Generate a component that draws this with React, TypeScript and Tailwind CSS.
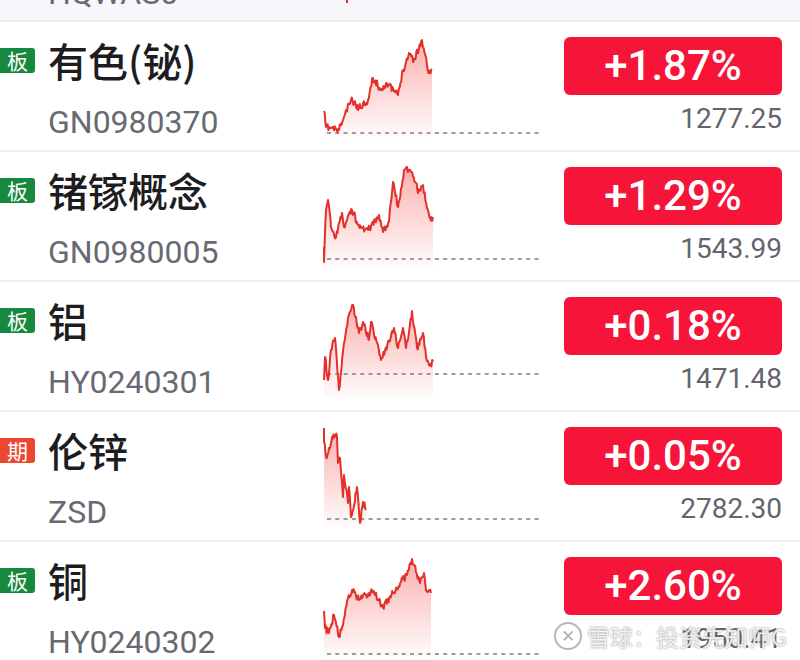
import React from 'react';

type Pt = [number, number];

interface Quote {
  badge: '板' | '期';
  name: string;
  code: string;
  change: string;
  price: string;
  keys: Pt[];
  base: number;
  seed: number;
}

const quotes: Quote[] = [
  {
    badge: '板',
    name: '有色(铋)',
    code: 'GN0980370',
    change: '+1.87%',
    price: '1277.25',
    base: 96,
    seed: 11,
    keys: [[1, 74], [3, 90], [16, 93], [21, 80], [28, 63], [36, 71], [45, 63], [50, 41], [58, 53], [63, 46], [75, 58], [80, 33], [86, 16], [91, 23], [99, 3], [104, 28], [106, 36], [109, 33]],
  },
  {
    badge: '板',
    name: '锗镓概念',
    code: 'GN0980005',
    change: '+1.29%',
    price: '1543.99',
    base: 92,
    seed: 23,
    keys: [[1, 80], [1, 95], [3, 43], [5, 33], [8, 60], [13, 70], [19, 46], [21, 60], [29, 43], [35, 58], [45, 63], [56, 48], [60, 65], [66, 55], [70, 15], [75, 40], [81, 3], [87, 3], [93, 16], [95, 26], [100, 18], [104, 41], [107, 51], [110, 50]],
  },
  {
    badge: '板',
    name: '铝',
    code: 'HY0240301',
    change: '+0.18%',
    price: '1471.48',
    base: 77,
    seed: 37,
    keys: [[1, 83], [2, 60], [5, 83], [8, 53], [12, 41], [16, 93], [20, 55], [25, 21], [30, 8], [36, 36], [40, 25], [46, 43], [48, 25], [58, 63], [66, 45], [71, 31], [75, 51], [80, 31], [83, 51], [89, 14], [94, 51], [100, 36], [103, 60], [106, 68], [110, 65]],
  },
  {
    badge: '期',
    name: '伦锌',
    code: 'ZSD',
    change: '+0.05%',
    price: '2782.30',
    base: 92,
    seed: 41,
    keys: [[1, 1], [1, 15], [3, 30], [6, 21], [9, 10], [11, 8], [14, 10], [15, 36], [17, 31], [20, 70], [21, 48], [25, 76], [26, 60], [28, 90], [31, 78], [34, 60], [37, 96], [40, 75], [43, 83]],
  },
  {
    badge: '板',
    name: '铜',
    code: 'HY0240302',
    change: '+2.60%',
    price: '1950.41',
    base: 97,
    seed: 53,
    keys: [[1, 54], [2, 71], [6, 76], [11, 58], [16, 80], [20, 68], [25, 41], [29, 33], [36, 43], [43, 38], [50, 34], [60, 50], [70, 36], [78, 25], [84, 18], [89, 2], [93, 15], [97, 26], [101, 16], [103, 33], [108, 36]],
  },
];

// small seeded random so the sparklines stay the same on every render
const rng = (seed: number) => {
  let s = seed;
  return () => {
    s = (s * 16807) % 2147483647;
    return (s - 1) / 2147483646;
  };
};

const buildSeries = (keys: Pt[], seed: number): Pt[] => {
  const rand = rng(seed);
  const out: Pt[] = [keys[0]];
  for (let i = 1; i < keys.length; i++) {
    const [x0, y0] = keys[i - 1];
    const [x1, y1] = keys[i];
    const steps = Math.max(1, Math.round((x1 - x0) / 0.8));
    for (let j = 1; j <= steps; j++) {
      const t = j / steps;
      const noise = j === steps ? 0 : (rand() - 0.5) * 7;
      out.push([x0 + (x1 - x0) * t, Math.min(100, Math.max(0, y0 + (y1 - y0) * t + noise))]);
    }
  }
  return out;
};

const Sparkline: React.FC<{ q: Quote; id: string }> = ({ q, id }) => {
  const pts = buildSeries(q.keys, q.seed).map(([x, y]) => [x + 1, y + 15] as Pt);
  const line = pts.map(([x, y]) => `${x.toFixed(1)},${y.toFixed(1)}`).join(' ');
  const last = pts[pts.length - 1];
  const area = `${pts[0][0]},115 ${line} ${last[0].toFixed(1)},115`;
  return (
    <svg width="218" height="128" viewBox="0 0 218 128">
      <defs>
        <linearGradient id={id} x1="0" y1="0" x2="0" y2="1">
          <stop offset="0%" stopColor="#f23a36" stopOpacity="0.4" />
          <stop offset="100%" stopColor="#f23a36" stopOpacity="0.02" />
        </linearGradient>
      </defs>
      <polygon points={area} fill={`url(#${id})`} />
      <line x1="5" y1={q.base + 15} x2="218" y2={q.base + 15} stroke="#7e7e7e" strokeWidth="1.6" strokeDasharray="4 4.3" />
      <polyline points={line} fill="none" stroke="#e3302a" strokeWidth="2" strokeLinejoin="round" />
    </svg>
  );
};

const QuoteRow: React.FC<{ q: Quote; idx: number }> = ({ q, idx }) => (
  <div className="flex h-[130px] border-b-2 border-[#f0f0f2] bg-white">
    <div className="flex w-[322px]">
      <div
        className={`mt-[26px] flex h-[25px] w-[35px] items-center justify-center rounded-r-[3px] text-[21px] leading-none text-white ${
          q.badge === '板' ? 'bg-[#16893e]' : 'bg-[#ea4630]'
        }`}
        style={{ fontFamily: '"Noto Sans CJK SC", sans-serif' }}
      >
        {q.badge}
      </div>
      <div className="ml-[13px] flex flex-col">
        <div
          className="mt-[18px] h-[40px] text-[40px] font-medium leading-[40px] text-[#1d1d1f]"
          style={{ fontFamily: '"Noto Sans CJK SC", sans-serif' }}
        >
          {q.name}
        </div>
        <div className="mt-[26px] font-['Roboto',sans-serif] text-[32px] leading-none text-[#686a72]">
          {q.code}
        </div>
      </div>
    </div>
    <Sparkline q={q} id={`spark-${idx}`} />
    <div className="ml-[24px] flex w-[218px] flex-col">
      <div className="mt-[15px] flex h-[58px] items-center justify-center rounded-[6px] bg-[#f61539] font-['Roboto',sans-serif] text-[42px] font-medium leading-none text-white">
        {q.change}
      </div>
      <div className="mt-[10px] text-right font-['Roboto',sans-serif] text-[28px] leading-none text-[#62656d]">
        {q.price}
      </div>
    </div>
  </div>
);

export default function App() {
  return (
    <div className="relative h-[660px] w-[800px] overflow-hidden bg-white">
      {/* previous row, only its bottom edge is visible */}
      <div className="flex h-[22px] overflow-hidden border-b-2 border-[#ededf0] bg-[#f6f6fb]">
        <div className="ml-[48px] mt-[-23px] w-[274px] font-['Roboto',sans-serif] text-[32px] leading-none text-[#686a72]">
          HQWAS0
        </div>
        <div className="ml-[24px] h-[3px] w-[2px] bg-[#e5312b]" />
      </div>

      {quotes.map((q, i) => (
        <QuoteRow key={q.code} q={q} idx={i} />
      ))}

      {/* watermark */}
      <div className="absolute left-[554px] top-[622px] flex items-center gap-[5px] whitespace-nowrap text-[23px] leading-none text-white/85 [text-shadow:0_0_2px_#7a7a7a]">
        <span className="flex h-[28px] w-[28px] items-center justify-center rounded-full border-2 border-[#b8b8b8] font-['Roboto',sans-serif] text-[17px] text-[#b0b0b0] [text-shadow:none]">
          ✕
        </span>
        <span style={{ fontFamily: '"Noto Sans CJK SC", sans-serif' }}>雪球：投资先知师G</span>
      </div>
    </div>
  );
}
